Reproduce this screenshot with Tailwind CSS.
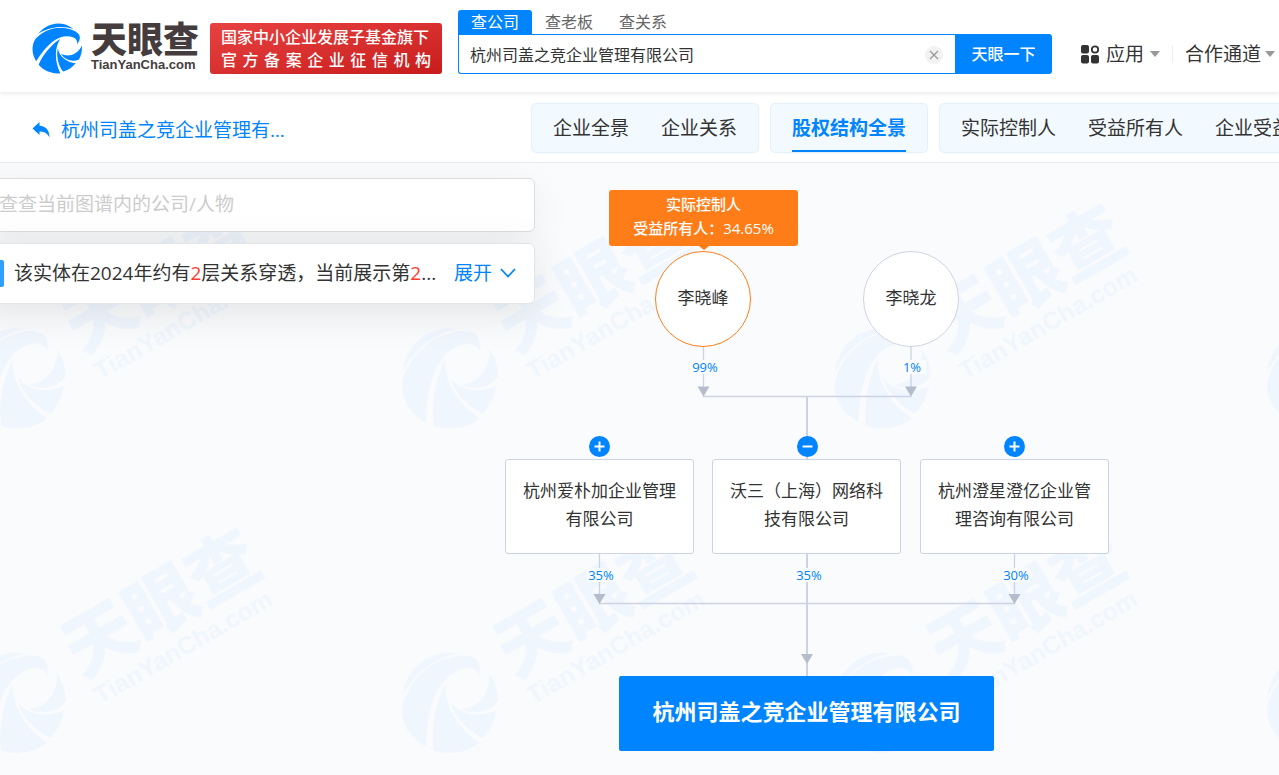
<!DOCTYPE html>
<html lang="zh-CN">

<head>
    <meta charset="UTF-8">
    <meta name="viewport" content="width=device-width, initial-scale=1.0">
    <title>股权结构全景 - 天眼查</title>
    <script src="https://cdn.jsdelivr.net/npm/@tailwindcss/browser@4"></script>
</head>

<body class="flex h-screen flex-col overflow-hidden bg-white font-['Open_Sans','Noto_Sans_CJK_SC',sans-serif] text-[#333]">

    <!-- shared shapes -->
    <svg class="absolute size-0" aria-hidden="true">
        <symbol id="emblem" viewBox="60 350 302 312">
            <path d="M64 506C64 425 125 352 212 352L236 354C165 366 98 420 66 484Z" />
            <path d="M65 522C80 448 140 384 208 369C240 359 274 358 290 372C303 384 304 404 302 424C296 405 280 397 262 399C222 405 188 432 164 486C146 530 139 580 137 639C94 616 62 572 65 522Z" />
            <path d="M196 448C194 505 224 574 301 628C270 654 210 669 161 650C152 590 166 505 196 448Z" />
            <path d="M213 505C246 546 308 551 352 528C347 560 334 588 312 611C282 603 226 556 213 505Z" />
            <path d="M331 415C347 438 358 468 358 498C336 531 290 545 246 525C295 519 336 480 331 415Z" />
        </symbol>
    </svg>

    <header class="relative z-20 flex h-[92px] shrink-0 items-start bg-white pl-8 whitespace-nowrap shadow-[0_2px_4px_rgba(0,0,0,0.08)]">
        <a href="#" class="mt-[23px] flex shrink-0 items-center gap-2" aria-label="天眼查 TianYanCha.com">
            <svg class="size-[51px] rotate-30 fill-[#0084ff]"><use href="#emblem" /></svg>
            <span class="flex w-[108px] flex-col text-[#453d3d]">
                <span class="text-[36px] leading-[32px] font-black">天眼查</span>
                <span class="font-['Liberation_Sans',sans-serif] text-[13px] leading-[18px] font-bold">TianYanCha.com</span>
            </span>
        </a>
        <p class="mt-[23px] ml-[11px] h-[51px] w-[232px] shrink-0 rounded-[3px] bg-linear-to-br from-[#e84141] to-[#c81b1b] px-[11px] pt-[3px] text-[16px] leading-[23px] font-medium text-white">
            国家中小企业发展子基金旗下<br>
            <span class="block [text-align-last:justify]">官方备案企业征信机构</span>
        </p>

        <form class="mt-[10px] ml-4 w-[594px] shrink-0 text-[16px]">
            <div class="flex h-6 text-[#666]">
                <button type="button" class="w-[74px] rounded-t-[3px] bg-[#0084ff] leading-6 text-white">查公司</button>
                <button type="button" class="w-[74px] leading-6">查老板</button>
                <button type="button" class="w-[74px] leading-6">查关系</button>
            </div>
            <div class="flex h-10">
                <div class="flex flex-1 items-center rounded-bl-[3px] border border-r-0 border-[#0084ff] pt-px pr-3 pl-[11px]">
                    <input type="text" aria-label="公司名称" value="杭州司盖之竞企业管理有限公司" class="min-w-0 flex-1 outline-none">
                    <button type="button" aria-label="清空" class="size-[18px] rounded-full bg-[#f2f2f2]">
                        <svg viewBox="0 0 18 18" class="stroke-[#999] stroke-[1.3]">
                            <path d="M5 5L13 13M13 5L5 13" />
                        </svg>
                    </button>
                </div>
                <button type="submit" class="w-[97px] rounded-r-[3px] bg-[#0084ff] font-medium text-white">天眼一下</button>
            </div>
        </form>

        <nav class="mt-10 ml-7 flex shrink-0 items-center text-[19px] leading-7">
            <a href="#" class="flex items-center">
                <svg viewBox="0 0 20 20" class="mr-1.5 size-5 fill-[#333]">
                    <rect x="1" y="1" width="8" height="8.500" rx="2" />
                    <circle cx="15" cy="5.500" r="3.200" class="fill-none stroke-[#333] stroke-[1.8]" />
                    <rect x="1" y="11" width="8" height="8.500" rx="2" />
                    <rect x="11" y="11" width="8" height="8.500" rx="2" />
                </svg>
                应用
                <svg viewBox="0 0 10 6" class="ml-1.5 h-1.5 w-2.5 fill-[#999]"><path d="M0 0H10L5.500 5.500Q5 6 4.500 5.500Z" /></svg>
            </a>
            <span class="mx-3 h-[18px] w-px bg-[#eee]"></span>
            <a href="#" class="flex items-center">
                合作通道
                <svg viewBox="0 0 10 6" class="ml-1 h-1.5 w-2.5 fill-[#999]"><path d="M0 0H10L5.500 5.500Q5 6 4.500 5.500Z" /></svg>
            </a>
        </nav>
    </header>

    <div class="flex h-[71px] shrink-0 items-start border-b border-[#e9ebf4] bg-white pt-[11px] pl-8 text-[19px] whitespace-nowrap">
        <a href="#" class="mt-[13px] flex w-[499px] shrink-0 items-center text-[#0084ff]">
            <svg viewBox="0 0 18 16" class="mr-[11px] h-4 w-[18px] fill-[#0084ff]">
                <path d="M0.500 6.500L7.500 0V3.800C14 4 17.500 8.500 17.500 15.500C15.500 11.500 12.500 9.500 7.500 9.500V13Z" />
            </svg>
            杭州司盖之竞企业管理有…
        </a>
        <nav class="flex shrink-0 gap-[11px] leading-[48px]">
            <div class="flex h-[50px] gap-8 rounded-[5px] border border-[#e3f0fe] bg-[#f2f9ff] px-[21px]">
                <a href="#">企业全景</a>
                <a href="#">企业关系</a>
            </div>
            <div class="h-[50px] rounded-[5px] border border-[#e3f0fe] bg-[#f2f9ff] px-[21px]">
                <a href="#" class="block h-[48px] border-b-2 border-[#0084ff] font-bold text-[#0084ff]">股权结构全景</a>
            </div>
            <div class="flex h-[50px] gap-8 rounded-[5px] border border-[#e3f0fe] bg-[#f2f9ff] px-[21px]">
                <a href="#">实际控制人</a>
                <a href="#">受益所有人</a>
                <a href="#">企业受益人</a>
            </div>
        </nav>
    </div>

    <main class="relative flex-1 overflow-hidden bg-[#fafbfd]">
        <!-- watermark -->
        <svg class="absolute inset-0 size-full" aria-hidden="true">
            <defs>
                <pattern id="watermark" x="-32" y="30" width="432.500" height="324.500" patternUnits="userSpaceOnUse">
                    <g class="fill-[#eff6fd]">
                        <use href="#emblem" x="0" y="134" width="99" height="103" />
                        <g transform="translate(112 176) rotate(-30)">
                            <text x="9" y="-12" class="text-[71px] font-black">天眼查</text>
                            <text x="12" y="20" class="font-['Liberation_Sans',sans-serif] text-[25px] font-bold">TianYanCha.com</text>
                        </g>
                    </g>
                </pattern>
            </defs>
            <rect width="100%" height="100%" fill="url(#watermark)" />
        </svg>

        <!-- equity chart -->
        <div class="absolute top-0 left-[500px] h-[611px] w-[620px] text-[17px] leading-7">
            <svg viewBox="0 0 620 611" class="absolute inset-0 size-full fill-none stroke-[#cdd3e2] stroke-[1.3]">
                <path d="M203.500 184V233.500H411V184M99.500 391V440.500H514.500V391" />
                <path d="M307 233V296M307 391V514" class="stroke-2" />
                <path d="M197.500 223.500H209.500L203.500 233.500ZM405 223.500H417L411 233.500ZM93.500 431H105.500L99.500 441ZM508.500 431H520.500L514.500 441ZM301 491H313L307 501Z" class="fill-[#b5bdcc] stroke-none" />
            </svg>

            <div class="absolute top-[27px] left-[109px] w-[189px] rounded-[3px] bg-[#ff7d18] pt-0.5 pb-1.5 text-center text-[15px] leading-6 font-medium text-white">
                实际控制人<br>受益所有人：34.65%
                <svg viewBox="0 0 10 4" class="absolute top-full left-[90px] h-1 w-2.5 fill-[#ff7d18]"><path d="M0 0H10L5 4Z" /></svg>
            </div>
            <div class="absolute top-[88px] left-[155px] flex size-24 items-center justify-center rounded-full border border-[#ff7d18] bg-white pb-0.5">李晓峰</div>
            <div class="absolute top-[88px] left-[363px] flex size-24 items-center justify-center rounded-full border border-[#cdd3e2] bg-white pb-0.5">李晓龙</div>

            <span class="absolute top-[197px] left-[191px] w-7 bg-[#fafbfd] text-center text-[13px] leading-[14px] text-[#0084ff]">99%</span>
            <span class="absolute top-[197px] left-[398px] w-7 bg-[#fafbfd] text-center text-[13px] leading-[14px] text-[#0084ff]">1%</span>

            <div class="absolute top-[296px] left-[5px] flex h-[95px] w-[189px] items-center justify-center rounded-[3px] border border-[#cdd3e2] bg-white pb-[3px] text-center">杭州爱朴加企业管理<br>有限公司</div>
            <div class="absolute top-[296px] left-[212px] flex h-[95px] w-[189px] items-center justify-center rounded-[3px] border border-[#cdd3e2] bg-white pb-[3px] text-center">沃三（上海）网络科<br>技有限公司</div>
            <div class="absolute top-[296px] left-[420px] flex h-[95px] w-[189px] items-center justify-center rounded-[3px] border border-[#cdd3e2] bg-white pb-[3px] text-center">杭州澄星澄亿企业管<br>理咨询有限公司</div>

            <button type="button" aria-label="展开" class="absolute top-[273px] left-[89px] size-[21px] rounded-full bg-[#0084ff]">
                <svg viewBox="0 0 21 21" class="stroke-white stroke-2"><path d="M5.500 10.500H15.500M10.500 5.500V15.500" /></svg>
            </button>
            <button type="button" aria-label="收起" class="absolute top-[273px] left-[297px] size-[21px] rounded-full bg-[#0084ff]">
                <svg viewBox="0 0 21 21" class="stroke-white stroke-2"><path d="M5.500 10.500H15.500" /></svg>
            </button>
            <button type="button" aria-label="展开" class="absolute top-[273px] left-[504px] size-[21px] rounded-full bg-[#0084ff]">
                <svg viewBox="0 0 21 21" class="stroke-white stroke-2"><path d="M5.500 10.500H15.500M10.500 5.500V15.500" /></svg>
            </button>

            <span class="absolute top-[405px] left-[87px] w-7 bg-[#fafbfd] text-center text-[13px] leading-[14px] text-[#0084ff]">35%</span>
            <span class="absolute top-[405px] left-[295px] w-7 bg-[#fafbfd] text-center text-[13px] leading-[14px] text-[#0084ff]">35%</span>
            <span class="absolute top-[405px] left-[502px] w-7 bg-[#fafbfd] text-center text-[13px] leading-[14px] text-[#0084ff]">30%</span>

            <div class="absolute top-[513px] left-[119px] flex h-[75px] w-[375px] items-center justify-center rounded-[2px] bg-[#0084ff] pb-[5px] text-[22px] font-bold text-white">杭州司盖之竞企业管理有限公司</div>
        </div>

        <!-- side panel, scrolled past the left edge -->
        <div class="relative -ml-5 flex w-[555px] flex-col gap-[11px] pt-[15px] text-[19px] leading-7 whitespace-nowrap">
            <input type="text" aria-label="查找公司或人物" placeholder="查查当前图谱内的公司/人物" class="h-[54px] rounded-[6px] border border-[#ddd] bg-white pb-0.5 pl-[18px] shadow-[0_8px_40px_rgba(0,0,0,0.06)] outline-none placeholder:text-[#ccc]">
            <div class="flex h-[61px] items-center rounded-[6px] border border-[#e2e4e6] bg-white pr-[18px] pl-[19px] shadow-[0_8px_40px_rgba(0,0,0,0.1)]">
                <span class="mr-[10px] h-[27px] w-1 rounded-r-[2px] bg-[#2fa0ff]"></span>
                <p class="flex-1 pb-0.5">该实体在2024年约有<span class="text-[#ff3b30]">2</span>层关系穿透，当前展示第<span class="text-[#ff3b30]">2</span>...</p>
                <button type="button" class="flex items-center gap-2 pb-0.5 text-[#0084ff]">
                    展开
                    <svg viewBox="0 0 16 10" class="h-2.5 w-4 fill-none stroke-[#0084ff] stroke-[1.8]"><path d="M1 1L8 8.500L15 1" /></svg>
                </button>
            </div>
        </div>
    </main>
</body>

</html>
